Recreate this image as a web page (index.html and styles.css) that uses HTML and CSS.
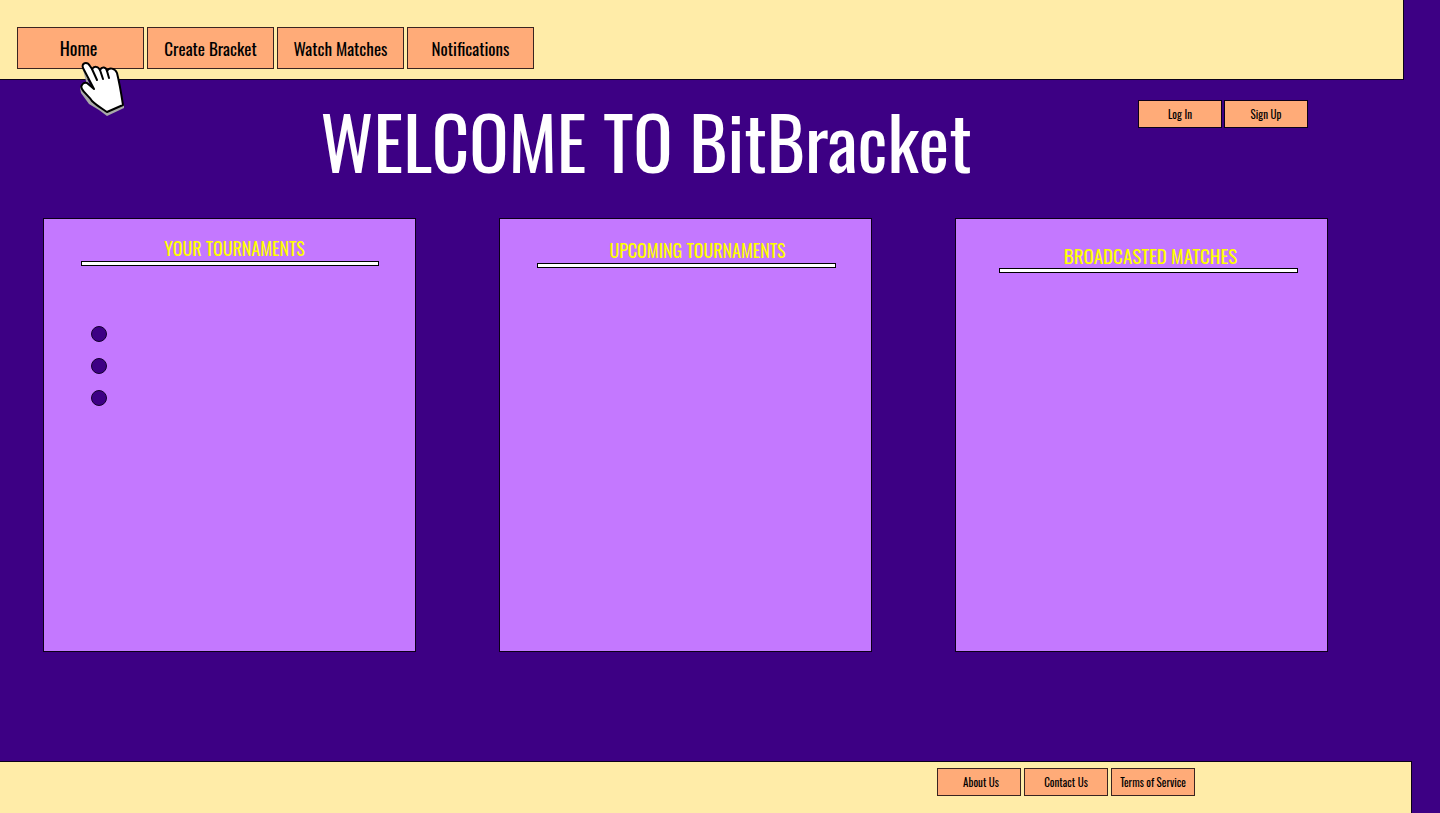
FILE: index.html
```html
<!DOCTYPE html>
<html lang="en">
<head>
<meta charset="utf-8">
<meta name="viewport" content="width=device-width, initial-scale=1">
<title>BitBracket</title>
<link rel="stylesheet" href="styles.css">
</head>
<body>
<header class="topbar">
  <nav class="nav">
    <a class="btn btn-nav btn-home" href="#home">Home
      <svg class="pointer" viewBox="0 0 46 57" aria-hidden="true">
        <path class="pointer-shade" d="M3 6 L12 28 L3 25 L1 28 L2 33 L10 44 L20 50 L28 56 L45 48 L45 44 L28 51 L12 40 Z"/>
        <path class="pointer-hand" d="M4 8 C2 3 8 1 11 6 L13 9 C15 6 19 6 21 10 C23 6 27 7 28 11 C30 7 36 8 38 13 C40 21 42 32 44 45 L28 52 C22 48 17 45 13 41 C10 36 5 33 3 29 C1 26 4 22 8 23 L15 29 Z"/>
        <path class="pointer-line" d="M13 9 L18 20 M21 10 L24 19 M28 11 L30 18"/>
      </svg>
    </a>
    <a class="btn btn-nav" href="#create">Create Bracket</a>
    <a class="btn btn-nav" href="#watch">Watch Matches</a>
    <a class="btn btn-nav" href="#notifications">Notifications</a>
  </nav>
</header>
<main class="main">
  <div class="hero">
    <h1 class="title">WELCOME TO BitBracket</h1>
    <div class="auth">
      <button class="btn btn-small btn-auth" type="button">Log In</button>
      <button class="btn btn-small btn-auth" type="button">Sign Up</button>
    </div>
  </div>
  <div class="panels">
    <section class="panel panel-yours">
      <h2 class="panel-title">YOUR TOURNAMENTS</h2>
      <div class="rule"></div>
      <ul class="dots"><li class="dot"></li><li class="dot"></li><li class="dot"></li></ul>
    </section>
    <section class="panel panel-upcoming">
      <h2 class="panel-title">UPCOMING TOURNAMENTS</h2>
      <div class="rule"></div>
    </section>
    <section class="panel panel-broadcast">
      <h2 class="panel-title">BROADCASTED MATCHES</h2>
      <div class="rule"></div>
    </section>
  </div>
</main>
<footer class="footer">
  <a class="btn btn-small btn-about" href="#about">About Us</a>
  <a class="btn btn-small" href="#contact">Contact Us</a>
  <a class="btn btn-small" href="#terms">Terms of Service</a>
</footer>
</body>
</html>
```
FILE: styles.css
```css
* { box-sizing: border-box; }

body {
  margin: 0;
  min-height: 100vh;
  display: flex;
  flex-direction: column;
  background: #3d0084;
  color: #000;
  font-family: Oswald, "Liberation Sans Narrow", "Liberation Sans", sans-serif;
}

.topbar {
  margin-right: 36px;
  padding: 27px 17px 10px;
  background: #ffeca8;
  border: solid #0c0018;
  border-width: 0 1px 1px 0;
}

.nav { display: flex; gap: 3px; }

.btn {
  display: flex;
  align-items: center;
  justify-content: center;
  background: #ffab78;
  border: 1px solid #3a2420;
  color: #000;
  font-family: inherit;
  text-decoration: none;
  white-space: nowrap;
  cursor: pointer;
}

.btn-nav {
  width: 127px;
  height: 42px;
  font-size: 17px;
}

.btn-home {
  position: relative;
  padding-right: 4px;
  font-size: 18px;
}

.pointer {
  position: absolute;
  left: 61px;
  top: 32px;
  width: 46px;
  height: 57px;
  z-index: 1;
}

.pointer-shade { fill: #a9a9a9; }
.pointer-hand { fill: #fff; stroke: #000; stroke-width: 2; stroke-linejoin: round; }
.pointer-line { fill: none; stroke: #000; stroke-width: 2; stroke-linecap: round; }

.btn-small {
  width: 84px;
  height: 28px;
  padding: 0;
  font-size: 11px;
}

.btn-auth { border-color: #0c0018; }
.btn-about { padding-left: 4px; }

.main {
  flex: 1;
  display: flex;
  flex-direction: column;
}

.hero {
  display: flex;
  align-items: flex-start;
  padding: 20px 132px 38px 154px;
}

.title {
  flex: 1;
  margin: 0;
  color: #fff;
  font-size: 73px;
  font-weight: 400;
  line-height: 80px;
  text-align: center;
}

.auth { display: flex; gap: 2px; }

.panels {
  flex: 1;
  display: grid;
  grid-template-columns: repeat(3, 1fr);
  gap: 83px;
  padding: 0 112px 109px 43px;
}

.panel {
  background: #c478ff;
  border: 1px solid #0c0018;
}

.panel-yours { padding: 17px 36px 0 37px; }
.panel-upcoming { padding: 19px 35px 0 37px; }
.panel-broadcast { padding: 24px 29px 0 43px; }

.panel-title {
  margin: 0;
  color: #ff0;
  font-size: 18px;
  font-weight: 400;
  line-height: 25px;
  text-align: center;
  white-space: nowrap;
}

.panel-yours .panel-title { padding-left: 9px; }
.panel-upcoming .panel-title { padding-left: 22px; }
.panel-broadcast .panel-title { padding-left: 4px; font-size: 19px; }

.rule {
  height: 5px;
  background: #fff;
  border: 1px solid #000;
}

.dots {
  display: grid;
  gap: 16px;
  margin: 60px 0 0 10px;
  padding: 0;
  list-style: none;
}

.dot {
  width: 16px;
  height: 16px;
  border: 1px solid #16002f;
  border-radius: 50%;
  background: #3d0084;
}

.footer {
  display: flex;
  justify-content: flex-end;
  gap: 3px;
  margin-right: 28px;
  padding: 6px 216px 17px 16px;
  background: #ffeca8;
  border: solid #0c0018;
  border-width: 1px 1px 0 0;
}
```
